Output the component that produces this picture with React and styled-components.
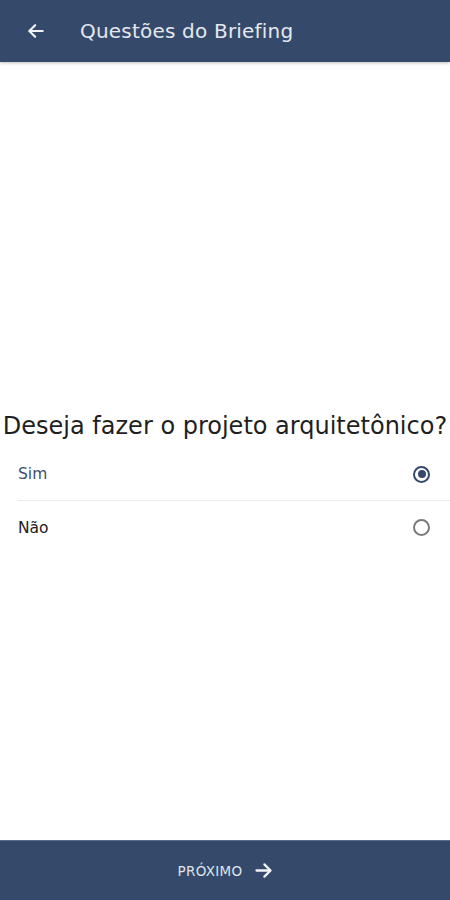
import React, { useState } from "react";
import styled, { createGlobalStyle } from "styled-components";

const Global = createGlobalStyle`
  html, body { margin: 0; padding: 0; background: #ffffff; }
  #root { height: 900px; }
  * { box-sizing: border-box; }
`;

const Screen = styled.div`
  width: 450px;
  height: 900px;
  display: flex;
  flex-direction: column;
  font-family: "DejaVu Sans", "Open Sans", sans-serif;
  background: #ffffff;
`;

const Header = styled.header`
  height: 62px;
  flex: none;
  background: #354a6a;
  display: flex;
  align-items: center;
  padding-left: 24px;
  gap: 32px;
  box-shadow: 0 1px 3px rgba(0, 0, 0, 0.25);
  position: relative;
  z-index: 1;
`;

const IconButton = styled.button`
  border: none;
  background: transparent;
  padding: 0;
  width: 24px;
  height: 24px;
  display: flex;
  align-items: center;
  justify-content: center;
  color: #f2f4f7;
`;

const Title = styled.h1`
  margin: 0;
  font-size: 20px;
  font-weight: 400;
  color: #e3e8ef;
  letter-spacing: 0.2px;
`;

const Main = styled.main`
  flex: 1;
  display: flex;
  flex-direction: column;
  justify-content: center;
  padding-top: 64px;
`;

const Question = styled.h2`
  margin: 0 0 8px;
  font-size: 24px;
  line-height: 28px;
  font-weight: 400;
  color: #1f1f1f;
  text-align: center;
  white-space: nowrap;
  letter-spacing: 0;
`;

const Options = styled.div`
  display: flex;
  flex-direction: column;
  padding-left: 18px;
`;

const Option = styled.label`
  height: 53px;
  display: flex;
  align-items: center;
  justify-content: space-between;
  padding-right: 20px;
  border-bottom: ${(p) => (p.$last ? "none" : "1px solid #ececec")};
  cursor: pointer;
`;

const OptionText = styled.span`
  font-size: 15.5px;
  color: ${(p) => (p.$selected ? "#3a4f74" : "#222222")};
`;

const Radio = styled.span`
  width: 17px;
  height: 17px;
  border-radius: 50%;
  border: 2px solid ${(p) => (p.$checked ? "#354a6a" : "#7a7a7a")};
  display: flex;
  align-items: center;
  justify-content: center;
  &::after {
    content: "";
    width: 8px;
    height: 8px;
    border-radius: 50%;
    background: ${(p) => (p.$checked ? "#354a6a" : "transparent")};
  }
`;

const Footer = styled.button`
  height: 60px;
  flex: none;
  border: none;
  border-top: 1px solid #5b6d88;
  background: #354a6a;
  display: flex;
  align-items: center;
  justify-content: center;
  gap: 11px;
  padding: 0 0 0 2px;
  font-family: "DejaVu Sans", "Open Sans", sans-serif;
  font-size: 13.5px;
  color: #dfe4ec;
  letter-spacing: 0.3px;
`;

const ArrowLeft = () => (
  <svg width="20" height="20" viewBox="0 0 24 24" fill="none" stroke="currentColor" strokeWidth="2.6" strokeLinecap="round" strokeLinejoin="round">
    <path d="M20 12H4.5" />
    <path d="M11 5l-7 7 7 7" />
  </svg>
);

const ArrowRight = () => (
  <svg width="21" height="21" viewBox="0 0 24 24" fill="none" stroke="#f2f4f7" strokeWidth="2.6" strokeLinecap="round" strokeLinejoin="round">
    <path d="M4 12h15.5" />
    <path d="M13 5l7 7-7 7" />
  </svg>
);

export default function App() {
  const [value, setValue] = useState("sim");
  const options = [
    { id: "sim", label: "Sim" },
    { id: "nao", label: "Não" },
  ];
  return (
    <>
      <Global />
      <Screen>
        <Header>
          <IconButton aria-label="Voltar">
            <ArrowLeft />
          </IconButton>
          <Title>Questões do Briefing</Title>
        </Header>
        <Main>
          <Question>Deseja fazer o projeto arquitetônico?</Question>
          <Options>
            {options.map((o, i) => (
              <Option key={o.id} $last={i === options.length - 1} onClick={() => setValue(o.id)}>
                <OptionText $selected={value === o.id}>{o.label}</OptionText>
                <Radio $checked={value === o.id} />
              </Option>
            ))}
          </Options>
        </Main>
        <Footer>
          PRÓXIMO
          <ArrowRight />
        </Footer>
      </Screen>
    </>
  );
}
